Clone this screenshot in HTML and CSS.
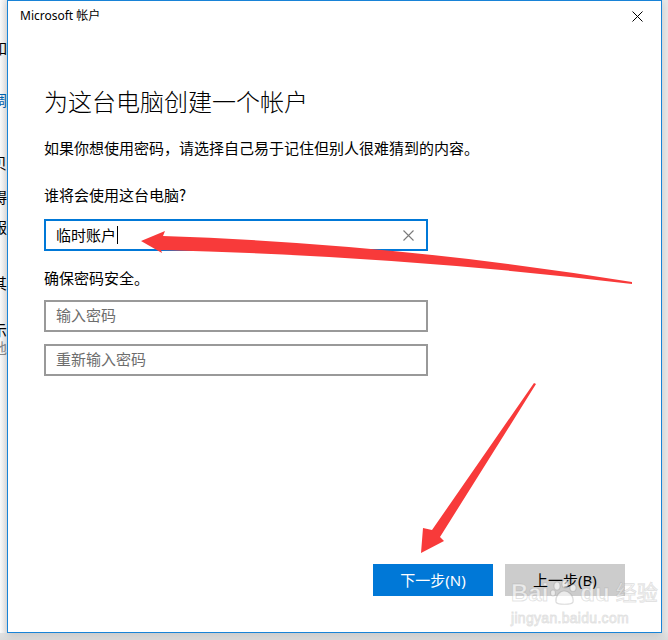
FILE: index.html
```html
<!DOCTYPE html>
<html lang="zh-CN">
<head>
    <meta charset="UTF-8">
    <meta name="viewport" content="width=device-width, initial-scale=1.0">
    <title>Microsoft 帐户</title>
    <link rel="stylesheet" href="styles.css">
</head>
<body>
    <div id="screen">
        <div class="behind">
            <p>如</p>
            <p class="link">调</p>
            <p>贝</p>
            <p>碍</p>
            <p>服</p>
            <p>其</p>
            <p>示</p>
            <p class="dim">地</p>
        </div>
        <div id="dialog">
            <div class="titlebar">
                <span>Microsoft 帐户</span>
                <svg class="close" width="11" height="11" viewBox="0 0 11 11">
                    <path d="M0.5 0.5 L10.5 10.5 M10.5 0.5 L0.5 10.5" stroke="#000" stroke-width="1" fill="none"/>
                </svg>
            </div>
            <div class="content">
                <h1>为这台电脑创建一个帐户</h1>
                <p class="intro">如果你想使用密码，请选择自己易于记住但别人很难猜到的内容。</p>
                <p class="label first">谁将会使用这台电脑?</p>
                <div class="field active">
                    <span class="value">临时账户</span><span class="caret"></span>
                    <svg class="clear" width="11" height="11" viewBox="0 0 11 11">
                        <path d="M0.5 0.5 L10.5 10.5 M10.5 0.5 L0.5 10.5" stroke="#7a7a7a" stroke-width="1.1" fill="none"/>
                    </svg>
                </div>
                <p class="label second">确保密码安全。</p>
                <div class="field pw"><span class="hint">输入密码</span></div>
                <div class="field pw2"><span class="hint">重新输入密码</span></div>
                <div class="actions">
                    <button class="btn primary">下一步(N)</button>
                    <button class="btn">上一步(B)</button>
                </div>
            </div>
        </div>

        <div class="watermark">
            <div class="wm-logo">
                <span>Bai</span>
                <svg width="30" height="26" viewBox="0 0 30 26">
                    <g fill="rgba(255,255,255,0.6)" stroke="rgba(140,140,140,0.3)" stroke-width="1.2">
                        <ellipse cx="8" cy="6" rx="3" ry="4"/>
                        <ellipse cx="16" cy="4" rx="3" ry="4"/>
                        <ellipse cx="24" cy="8" rx="3" ry="3.5"/>
                        <ellipse cx="4" cy="13" rx="2.5" ry="3"/>
                        <path d="M7 22 C6 16 11 11 15 11 C20 11 25 16 24 22 C23 25 8 25 7 22 Z"/>
                    </g>
                </svg>
                <span>du</span>
                <span class="wm-cn">经验</span>
            </div>
            <div class="wm-url">jingyan.baidu.com</div>
        </div>

        <svg class="arrows" width="668" height="640" viewBox="0 0 668 640">
            <path fill="#f83a3a" d="M141 241 L165 231 L163 236 Q400 244 632 282 L632 284 Q400 256 161 250 L162 253 Z"/>
            <path fill="#f83a3a" d="M421 553 L423 528 L432 530 L534 383 L536 384 L440 537 L444 541 Z"/>
        </svg>
    </div>
</body>
</html>
```

FILE: styles.css
```css
body {
    margin: 0;
    width: 668px;
    height: 640px;
    overflow: hidden;
    background: #e2e2e2;
    font-family: "Noto Sans CJK SC", "Noto Sans", sans-serif;
    color: #000;
}
#screen {
    display: flex;
    position: relative;
    width: 668px;
    height: 640px;
    background: linear-gradient(to bottom, #e8e8e8 0, #e8e8e8 630px, #dadada 640px);
}
.behind {
    width: 7px;
    height: 633px;
    overflow: hidden;
    background: linear-gradient(to right, #fbfbfb, #e6e6e6);
    font-size: 15px;
}
.behind p {
    margin: 0 0 0 -8px;
    line-height: 18px;
    white-space: nowrap;
}
.behind p:nth-child(1) { margin-top: 39px; }
.behind p:nth-child(2) { margin-top: 34px; }
.behind p:nth-child(3) { margin-top: 45px; }
.behind p:nth-child(4) { margin-top: 16px; }
.behind p:nth-child(5) { margin-top: 12px; }
.behind p:nth-child(6) { margin-top: 38px; }
.behind p:nth-child(7) { margin-top: 29px; }
.behind .link { color: #0063b1; }
.behind .dim { color: #888; }

#dialog {
    width: 655px;
    height: 633px;
    box-sizing: border-box;
    border: 1px solid #1883d7;
    background: #fff;
    display: flex;
    flex-direction: column;
    box-shadow: 0 2px 8px rgba(0, 0, 0, 0.15);
}
.titlebar {
    height: 30px;
    flex: none;
    display: flex;
    align-items: center;
    justify-content: space-between;
    padding: 0 18px 0 12px;
    font-family: "Noto Sans", "Noto Sans CJK SC", sans-serif;
    font-size: 12px;
}
.titlebar span {
    margin-top: -2px;
}
.content {
    flex: 1;
    display: flex;
    flex-direction: column;
    padding: 0 36px 36px;
}
h1 {
    margin: 54px 0 0;
    font-size: 24px;
    line-height: 32px;
    font-weight: 300;
}
.intro, .label {
    margin: 0;
    padding-bottom: 2px;
    font-size: 15px;
    line-height: 20px;
}
.intro { margin-top: 21px; }
.label.first { margin-top: 25px; }
.label.second { margin-top: 17px; }

.field {
    width: 384px;
    height: 32px;
    box-sizing: border-box;
    border: 2px solid #999;
    display: flex;
    align-items: center;
    padding: 0 12px 0 10px;
    font-size: 15px;
}
.field.active {
    margin-top: 12px;
    border-color: #0078d7;
}
.field.pw { margin-top: 10px; }
.field.pw2 { margin-top: 12px; }
.value {
    line-height: 20px;
}
.caret {
    width: 1px;
    height: 18px;
    margin-left: 1px;
    background: #000;
}
.clear {
    margin-left: auto;
}
.hint {
    color: #6d6d6d;
    line-height: 20px;
    margin-top: -3px;
}

.actions {
    margin-top: auto;
    display: flex;
    justify-content: flex-end;
    gap: 12px;
}
.btn {
    width: 120px;
    height: 32px;
    border: none;
    padding: 0 0 2px;
    background: #cccccc;
    color: #000;
    font-family: "Noto Sans", "Noto Sans CJK SC", sans-serif;
    font-size: 15px;
}
.btn.primary {
    background: #0078d7;
    color: #fff;
}

.watermark {
    position: absolute;
    left: 511px;
    top: 580px;
    color: rgba(255, 255, 255, 0.6);
    -webkit-text-stroke: 1px rgba(140, 140, 140, 0.25);
    font-family: "Liberation Sans", "Noto Sans CJK SC", sans-serif;
    pointer-events: none;
}
.wm-logo {
    display: flex;
    align-items: center;
    font-size: 24px;
    font-weight: bold;
    line-height: 26px;
}
.wm-logo svg {
    margin: 0 1px;
}
.wm-cn {
    margin-left: 6px;
    font-size: 21px;
    font-weight: normal;
}
.wm-url {
    font-size: 14px;
    line-height: 16px;
    margin-top: 4px;
    letter-spacing: 0.3px;
}
.arrows {
    position: absolute;
    left: 0;
    top: 0;
    pointer-events: none;
}
```
